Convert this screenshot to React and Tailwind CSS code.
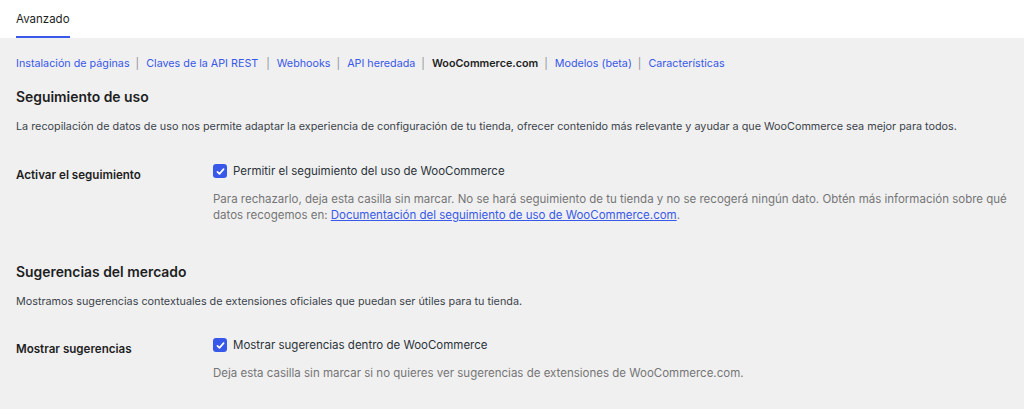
import React from "react";

const font = { fontFamily: "Inter, 'Noto Sans', sans-serif" };

function Check() {
  return (
    <span className="flex h-[14px] w-[14px] shrink-0 items-center justify-center rounded-[3px] bg-[#3858e9]">
      <svg viewBox="0 0 16 16" className="h-[11px] w-[11px]" fill="none" stroke="white" strokeWidth="2.4" strokeLinecap="round" strokeLinejoin="round">
        <path d="M3.5 8.5l3 3 6-7" />
      </svg>
    </span>
  );
}

const links = [
  "Instalación de páginas",
  "Claves de la API REST",
  "Webhooks",
  "API heredada",
  "WooCommerce.com",
  "Modelos (beta)",
  "Características",
];

function SettingRow({ label, checkLabel, children, className }) {
  return (
    <div className={"flex " + className}>
      <div className="w-[197px] shrink-0 pt-[4px] text-[11.6px] leading-[15px] font-semibold text-[#1e1e1e]">{label}</div>
      <div className="flex-1">
        <label className="flex h-[14px] items-center gap-[6px] text-[11.5px] leading-[15px] text-[#2c3338]">
          <Check />
          <span className="pt-[1px]">{checkLabel}</span>
        </label>
        <p className="mt-[13px] text-[11.5px] leading-[16px] text-[#757575]">{children}</p>
      </div>
    </div>
  );
}

export default function App() {
  return (
    <div className="min-h-[409px] bg-[#f0f0f1]" style={font}>
      <div className="h-[38px] bg-white px-[16px]">
        <div className="inline-flex h-full flex-col justify-between">
          <span className="pt-[12px] text-[11.5px] leading-[15px] text-[#1e1e1e]">Avanzado</span>
          <span className="h-[2px] bg-[#3858e9]" />
        </div>
      </div>

      <div className="px-[16px]">
        <ul className="flex items-center whitespace-nowrap pt-[18px] text-[10.75px] leading-[15px] text-[#3858e9]">
          {links.map((l, i) => (
            <li key={l} className="flex items-center">
              {i > 0 && <span className={(i === 2 ? "ml-[8px]" : "ml-[6px]") + " mr-[7px] text-[#8c8f94]"}>|</span>}
              {l === "WooCommerce.com" ? (
                <span className="font-semibold text-[#1e1e1e]">{l}</span>
              ) : (
                <a href="#">{l}</a>
              )}
            </li>
          ))}
        </ul>

        <h2 className="mt-[17px] text-[13.9px] leading-[18px] font-semibold text-[#1e1e1e]">Seguimiento de uso</h2>
        <p className="mt-[13px] whitespace-nowrap text-[10.8px] leading-[15px] text-[#3c434a]">
          La recopilación de datos de uso nos permite adaptar la experiencia de configuración de tu tienda, ofrecer contenido más relevante y ayudar a que WooCommerce sea mejor para todos.
        </p>

        <SettingRow className="mt-[30px]" label="Activar el seguimiento" checkLabel="Permitir el seguimiento del uso de WooCommerce">
          <span className="whitespace-nowrap">
            Para rechazarlo, deja esta casilla sin marcar. No se hará seguimiento de tu tienda y no se recogerá ningún dato. Obtén más información sobre qué
          </span>
          <br />
          datos recogemos en:{" "}
          <a href="#" className="text-[#3858e9] underline">Documentación del seguimiento de uso de WooCommerce.com</a>.
        </SettingRow>

        <h2 className="mt-[40px] text-[13.9px] leading-[18px] font-semibold text-[#1e1e1e]">Sugerencias del mercado</h2>
        <p className="mt-[13px] text-[10.8px] leading-[15px] text-[#3c434a]">
          Mostramos sugerencias contextuales de extensiones oficiales que puedan ser útiles para tu tienda.
        </p>

        <SettingRow className="mt-[29px]" label="Mostrar sugerencias" checkLabel="Mostrar sugerencias dentro de WooCommerce">
          Deja esta casilla sin marcar si no quieres ver sugerencias de extensiones de WooCommerce.com.
        </SettingRow>
      </div>
    </div>
  );
}
